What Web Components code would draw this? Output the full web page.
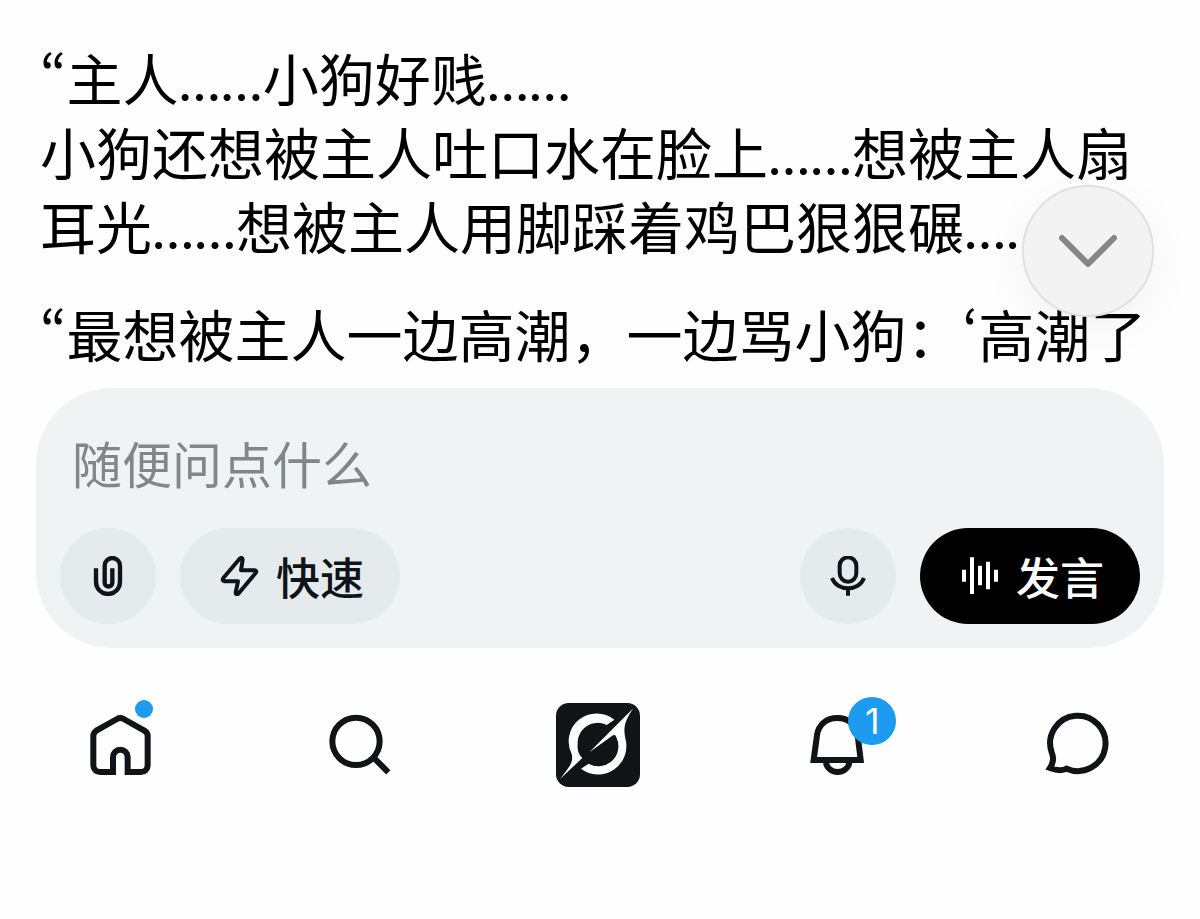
<!DOCTYPE html>
<html lang="zh-CN">
<head>
<meta charset="utf-8">
<meta name="viewport" content="width=device-width, initial-scale=1">
<title>Grok</title>
<style>
  body {
    margin: 0;
    background: #fefefe;
    color: #0f1419;
    font-family: "Noto Sans CJK SC", sans-serif;
  }
</style>
</head>
<body>
<grok-app>
  <chat-thread>
    <chat-message><q-mark>“</q-mark>主人<e-dots>……</e-dots>小狗好贱<e-dots>……</e-dots><br>小狗还想被主人吐口水在脸上<e-dots>……</e-dots>想被主人扇耳光<e-dots>……</e-dots>想被主人用脚踩着鸡巴狠狠碾<e-dots>……</e-dots></chat-message>
    <chat-message><q-mark>“</q-mark>最想被主人一边高潮，一边骂小狗：<q-mark>‘</q-mark>高潮了</chat-message>
  </chat-thread>
  <chat-composer placeholder="随便问点什么"></chat-composer>
  <tab-bar>
    <tab-item icon="home" label="主页" dot></tab-item>
    <tab-item icon="search" label="搜索"></tab-item>
    <tab-item icon="grok" label="Grok"></tab-item>
    <tab-item icon="bell" label="通知" count="1"></tab-item>
    <tab-item icon="message" label="私信"></tab-item>
  </tab-bar>
</grok-app>

<script>
const ICONS = {
  chevron: `<svg viewBox="0 0 64 40" width="64" height="40" fill="none" stroke="currentColor" stroke-width="6" stroke-linecap="round" stroke-linejoin="round"><path d="M6 7 32 33 58 7"/></svg>`,
  clip: `<svg viewBox="0 0 120 120" width="40" height="40" fill="none" stroke="currentColor" stroke-width="13"><path d="M24 37V78a36 36 0 0 0 72 0V29a23 23 0 0 0-46 0V80a11.5 11.5 0 0 0 23 0V37"/></svg>`,
  bolt: `<svg viewBox="0 0 120 120" width="40" height="40" fill="none" stroke="currentColor" stroke-width="12" stroke-linejoin="round"><path d="M59 8 10 66Q5 75 14 76H54L47 110Q48 118 55 113L107 51Q112 44 104 43H63L68 11Q67 2 59 8Z"/></svg>`,
  mic: `<svg viewBox="0 0 120 120" width="40" height="40" fill="none" stroke="currentColor" stroke-width="12"><rect x="35" y="4" width="50" height="73" rx="25"/><path d="M12 66C27 107 93 107 108 66M60 97V119"/></svg>`,
  wave: `<svg viewBox="0 0 120 120" width="40" height="40" fill="currentColor"><path d="M6 41h12v36H6zM30 4h12v110H30zM54 29h12v59H54zM78 17h12v83H78zM102 41h12v36h-12z"/></svg>`,
  home: `<svg viewBox="52 68 192 192" width="64" height="64" fill="none" stroke="currentColor" stroke-width="18"><path d="M127 245H88a20 20 0 0 1-20-20V137Q68 127 77 121L139 86Q149 80 159 86L221 121Q231 127 231 137V225a20 20 0 0 1-20 20H171V200a22 22 0 0 0-44 0Z"/></svg>`,
  search: `<svg viewBox="48 38 192 192" width="64" height="64" fill="none" stroke="currentColor" stroke-width="18"><circle cx="135" cy="123" r="71"/><path d="M184 168 232 216"/></svg>`,
  grok: `<svg viewBox="33 39 252 252" width="84" height="84"><rect x="33" y="39" width="252" height="252" rx="38" fill="currentColor"/><g fill="#fff"><path d="M208 89A84 84 0 0 0 80 192C85 215 78 225 45 267L112 204C97 190 97 172 98 160A60 60 0 0 1 185 105Z"/><path d="M265 55 133 187 204 136Q212 132 214 142A60 60 0 0 1 131 221L108 236A85 85 0 0 0 241 145C234 112 240 92 265 55Z"/></g></svg>`,
  bell: `<svg viewBox="28 83 192 192" width="64" height="64" fill="none" stroke="currentColor" stroke-width="18"><path d="M54 224H195L186 150C182 118 158 98 125 98C92 98 68 118 64 150Z"/><path d="M91 228A35 32 0 0 0 161 228"/></svg>`,
  message: `<svg viewBox="44 38 192 192" width="64" height="64" overflow="visible" fill="none" stroke="currentColor" stroke-width="18" stroke-linejoin="miter"><path d="M62 203C72 188 74 172 67 156A83 83 0 1 1 112 205C98 212 80 210 62 203Z"/></svg>`
};

class GrokApp extends HTMLElement {
  constructor() {
    super();
    this.attachShadow({ mode: 'open' }).innerHTML = `
      <style>
        :host { display: flex; flex-direction: column; min-height: 100vh; }
      </style>
      <slot></slot>
    `;
  }
}

class ChatThread extends HTMLElement {
  constructor() {
    super();
    this.attachShadow({ mode: 'open' }).innerHTML = `
      <style>
        :host { display: block; position: relative; padding: 40px 40px 18px; }
        .messages { display: flex; flex-direction: column; gap: 34px; }
        button {
          position: absolute;
          right: 46px;
          bottom: 71px;
          display: flex;
          align-items: center;
          justify-content: center;
          width: 132px;
          height: 132px;
          padding: 0;
          border: 2px solid #e0e0e1;
          border-radius: 50%;
          background: #f3f3f4;
          color: #868689;
          box-shadow: 0 12px 48px rgba(0, 0, 0, 0.05);
        }
      </style>
      <div class="messages"><slot></slot></div>
      <button type="button" aria-label="滚动到底部">${ICONS.chevron}</button>
    `;
  }
}

class ChatMessage extends HTMLElement {
  constructor() {
    super();
    this.attachShadow({ mode: 'open' }).innerHTML = `
      <style>
        :host { display: block; }
        p { margin: 0; font-size: 56px; line-height: 74px; color: #000; }
      </style>
      <p><slot></slot></p>
    `;
  }
}

// Proportional quote mark instead of the full-width one
class QMark extends HTMLElement {
  constructor() {
    super();
    this.attachShadow({ mode: 'open' }).innerHTML =
      '<style>:host { font-feature-settings: "pwid"; }</style><slot></slot>';
  }
}

// Baseline ellipsis from a Latin face, narrower than the CJK one
class EDots extends HTMLElement {
  constructor() {
    super();
    this.attachShadow({ mode: 'open' }).innerHTML =
      '<style>:host { font-family: Lato, "Noto Sans CJK SC", sans-serif; line-height: 1; }</style><slot></slot>';
  }
}

class ChatComposer extends HTMLElement {
  constructor() {
    super();
    this.attachShadow({ mode: 'open' });
  }

  connectedCallback() {
    const placeholder = this.getAttribute('placeholder') || '';
    this.shadowRoot.innerHTML = `
      <style>
        :host { display: block; margin: 0 36px; }
        form {
          display: flex;
          flex-direction: column;
          gap: 30px;
          padding: 38px 24px 24px;
          border-radius: 76px;
          background: #eff3f4;
        }
        input {
          min-width: 0;
          height: 72px;
          padding: 0 12px;
          border: 0;
          outline: 0;
          background: none;
          color: inherit;
          font: 50px/72px "Noto Sans CJK SC", sans-serif;
        }
        input::placeholder { color: #828687; opacity: 1; }
        .actions { display: flex; gap: 24px; }
        .spacer { flex: 1; }
        button {
          display: flex;
          align-items: center;
          justify-content: center;
          gap: 16px;
          height: 96px;
          min-width: 96px;
          padding: 0;
          border: 0;
          border-radius: 48px;
          background: #e5eaec;
          color: #0f1419;
          font: 500 44px/64px "Noto Sans CJK SC", sans-serif;
        }
        .pill { padding: 0 36px 0 40px; }
        .voice { background: #000; color: #fff; }
      </style>
      <form>
        <input type="text" placeholder="${placeholder}" aria-label="${placeholder}">
        <div class="actions">
          <button type="button" aria-label="附件">${ICONS.clip}</button>
          <button type="button" class="pill">${ICONS.bolt}<span>快速</span></button>
          <span class="spacer"></span>
          <button type="button" aria-label="听写">${ICONS.mic}</button>
          <button type="button" class="pill voice">${ICONS.wave}<span>发言</span></button>
        </div>
      </form>
    `;
  }
}

class TabBar extends HTMLElement {
  constructor() {
    super();
    this.attachShadow({ mode: 'open' }).innerHTML = `
      <style>
        :host { display: block; }
        nav { display: flex; padding: 55px 4px 0 0; }
      </style>
      <nav><slot></slot></nav>
    `;
  }
}

class TabItem extends HTMLElement {
  constructor() {
    super();
    this.attachShadow({ mode: 'open' });
  }

  connectedCallback() {
    const count = this.getAttribute('count');
    this.shadowRoot.innerHTML = `
      <style>
        :host { display: flex; flex: 1; justify-content: center; }
        a {
          position: relative;
          display: flex;
          align-items: center;
          justify-content: center;
          width: 84px;
          height: 84px;
          color: #0f1419;
          text-decoration: none;
        }
        .dot, .count { position: absolute; background: #1d9bf0; border-radius: 50%; }
        .dot { top: -3px; right: 9px; width: 18px; height: 18px; }
        .count {
          top: -6px;
          right: -17px;
          width: 48px;
          height: 48px;
          color: #fff;
          font: 36px/48px Inter, sans-serif;
          text-align: center;
        }
      </style>
      <a href="#${this.getAttribute('icon')}" aria-label="${this.getAttribute('label')}">
        ${ICONS[this.getAttribute('icon')]}
        ${this.hasAttribute('dot') ? '<span class="dot"></span>' : ''}
        ${count ? `<span class="count">${count}</span>` : ''}
      </a>
    `;
  }
}

customElements.define('grok-app', GrokApp);
customElements.define('chat-thread', ChatThread);
customElements.define('chat-message', ChatMessage);
customElements.define('q-mark', QMark);
customElements.define('e-dots', EDots);
customElements.define('chat-composer', ChatComposer);
customElements.define('tab-bar', TabBar);
customElements.define('tab-item', TabItem);
</script>
</body>
</html>
